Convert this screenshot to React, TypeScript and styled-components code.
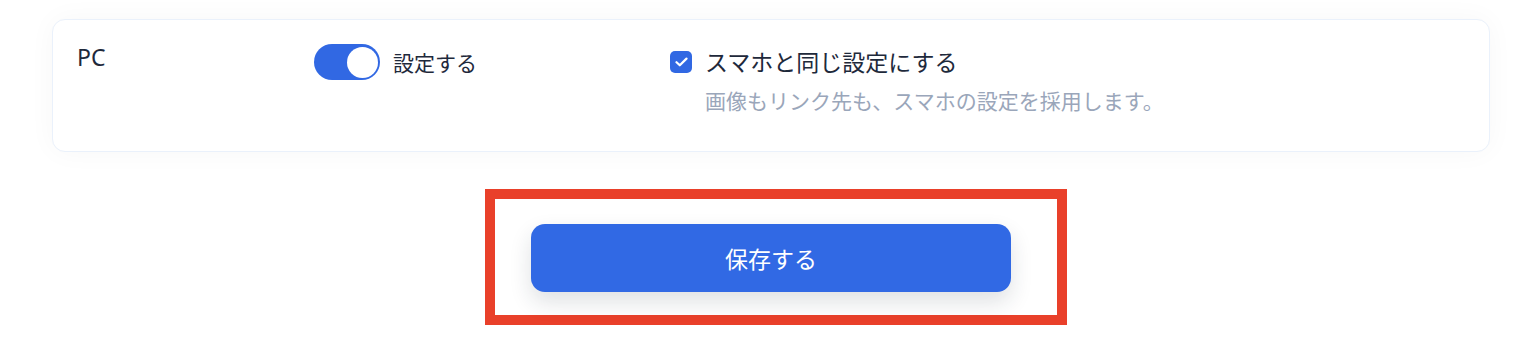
import React from "react";
import styled, { createGlobalStyle } from "styled-components";

const GlobalStyle = createGlobalStyle`
  html, body {
    margin: 0;
    padding: 0;
    background: #ffffff;
  }
  body {
    font-family: "Noto Sans", "Noto Sans CJK JP", sans-serif;
    color: #1e293b;
  }
`;

const Page = styled.div`
  display: flex;
  flex-direction: column;
  padding: 19px 40px 0 52px;
`;

const Card = styled.section`
  display: grid;
  grid-template-columns: 237px 356px 1fr;
  align-items: start;
  box-sizing: border-box;
  height: 133px;
  padding: 24px 24px 0;
  background: #ffffff;
  border: 1px solid #eaf1fb;
  border-radius: 13px;
  box-shadow: 0 0 28px rgba(15, 23, 42, 0.035);
`;

const Label = styled.div`
  font-size: 23px;
  line-height: 30px;
  margin-top: -2px;
  color: #1e293b;
`;

const SwitchRow = styled.label`
  display: flex;
  align-items: center;
  gap: 13px;
  font-size: 21px;
  color: #1e293b;
`;

const Switch = styled.span<{ $on: boolean }>`
  display: flex;
  justify-content: ${(p) => (p.$on ? "flex-end" : "flex-start")};
  align-items: center;
  box-sizing: border-box;
  width: 66px;
  height: 36px;
  padding: 0 2.5px;
  border-radius: 18px;
  background: ${(p) => (p.$on ? "#3168e3" : "#cbd5e1")};
`;

const Knob = styled.span`
  width: 31px;
  height: 31px;
  border-radius: 50%;
  background: #ffffff;
`;

const Option = styled.div`
  display: flex;
  flex-direction: column;
  gap: 13px;
  padding-top: 7px;
`;

const CheckRow = styled.label`
  display: flex;
  align-items: center;
  gap: 13px;
  font-size: 23px;
  line-height: 22px;
  color: #1e293b;
`;

const Box = styled.span`
  display: flex;
  align-items: center;
  justify-content: center;
  width: 22px;
  height: 22px;
  border-radius: 5px;
  background: #3168e3;
`;

const Help = styled.p`
  margin: 0;
  padding-left: 35px;
  font-size: 21px;
  line-height: 30px;
  color: #9aa6ba;
`;

const Actions = styled.div`
  display: flex;
  justify-content: center;
  padding-top: 37px;
`;

const Highlight = styled.div`
  display: flex;
  margin-left: 10px;
  padding: 25px 46px 23px 36px;
  border: 10px solid #e9402a;
`;

const SaveButton = styled.button`
  width: 480px;
  height: 68px;
  border: none;
  border-radius: 14px;
  background: #3169e4;
  color: #ffffff;
  font-family: "Noto Sans CJK JP", sans-serif;
  font-size: 23px;
  font-weight: 400;
  box-shadow: 0 10px 22px rgba(30, 41, 59, 0.14);
  cursor: pointer;
`;

export default function App() {
  return (
    <>
      <GlobalStyle />
      <Page>
        <Card>
          <Label>PC</Label>
          <SwitchRow>
            <Switch $on>
              <Knob />
            </Switch>
            設定する
          </SwitchRow>
          <Option>
            <CheckRow>
              <Box>
                <svg width="13" height="10" viewBox="0 0 13 10" fill="none">
                  <path
                    d="M1.5 5.2 4.8 8.3 11.5 1.6"
                    stroke="#ffffff"
                    strokeWidth="2.2"
                    strokeLinecap="round"
                    strokeLinejoin="round"
                  />
                </svg>
              </Box>
              スマホと同じ設定にする
            </CheckRow>
            <Help>画像もリンク先も、スマホの設定を採用します。</Help>
          </Option>
        </Card>
        <Actions>
          <Highlight>
            <SaveButton>保存する</SaveButton>
          </Highlight>
        </Actions>
      </Page>
    </>
  );
}
